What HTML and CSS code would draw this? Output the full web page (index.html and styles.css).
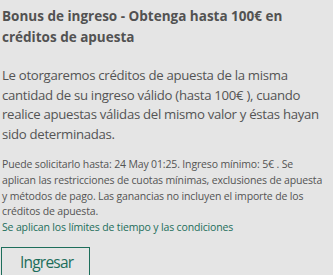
FILE: index.html
```html
<!DOCTYPE html>
<html lang="es">
<head>
<meta charset="utf-8">
<link rel="stylesheet" href="styles.css">
</head>
<body>
<div class="card">
  <h2 class="title">Bonus de ingreso - Obtenga hasta 100€ en créditos de apuesta</h2>
  <p class="desc">Le otorgaremos créditos de apuesta de la misma cantidad de su ingreso válido (hasta 100€ ), cuando realice apuestas válidas del mismo valor y éstas hayan sido determinadas.</p>
  <p class="terms">Puede solicitarlo hasta: 24 May 01:25. Ingreso mínimo: 5€ . Se<br>aplican las restricciones de cuotas mínimas, exclusiones de apuesta<br>y métodos de pago. Las ganancias no incluyen el importe de los<br>créditos de apuesta.</p>
  <a class="link" href="#">Se aplican los límites de tiempo y las condiciones</a>
  <div class="actions">
    <button class="btn">Ingresar</button>
  </div>
</div>
</body>
</html>
```
FILE: styles.css
```css
html, body {
  margin: 0;
  padding: 0;
  background: #e5e5e5;
}
body {
  font-family: "Open Sans", "Noto Sans", sans-serif;
  color: #545454;
}
.card {
  display: flex;
  flex-direction: column;
  align-items: flex-start;
  padding: 6px 2px 0 2px;
}
.title {
  margin: 0;
  font-size: 13.5px;
  font-weight: 700;
  line-height: 21px;
  color: #525252;
}
.desc {
  margin: 18px 0 0 0;
  font-size: 13.2px;
  letter-spacing: -0.3px;
  line-height: 19.6px;
}
.terms {
  margin: 13px 0 0 0;
  font-size: 10.5px;
  letter-spacing: -0.15px;
  line-height: 15.6px;
  white-space: nowrap;
}
.link {
  font-size: 10.5px;
  letter-spacing: -0.15px;
  line-height: 15.6px;
  color: #1d6e5b;
  text-decoration: none;
}
.actions {
  margin-top: 12px;
}
.btn {
  font-family: inherit;
  font-size: 15.5px;
  letter-spacing: -0.8px;
  color: #1d6e5b;
  background: transparent;
  border: 1px solid #1d6e5b;
  border-radius: 0;
  width: 89px;
  height: 34px;
  padding: 0 0 4px 18px;
  text-align: left;
  margin-left: -1px;
}
```
